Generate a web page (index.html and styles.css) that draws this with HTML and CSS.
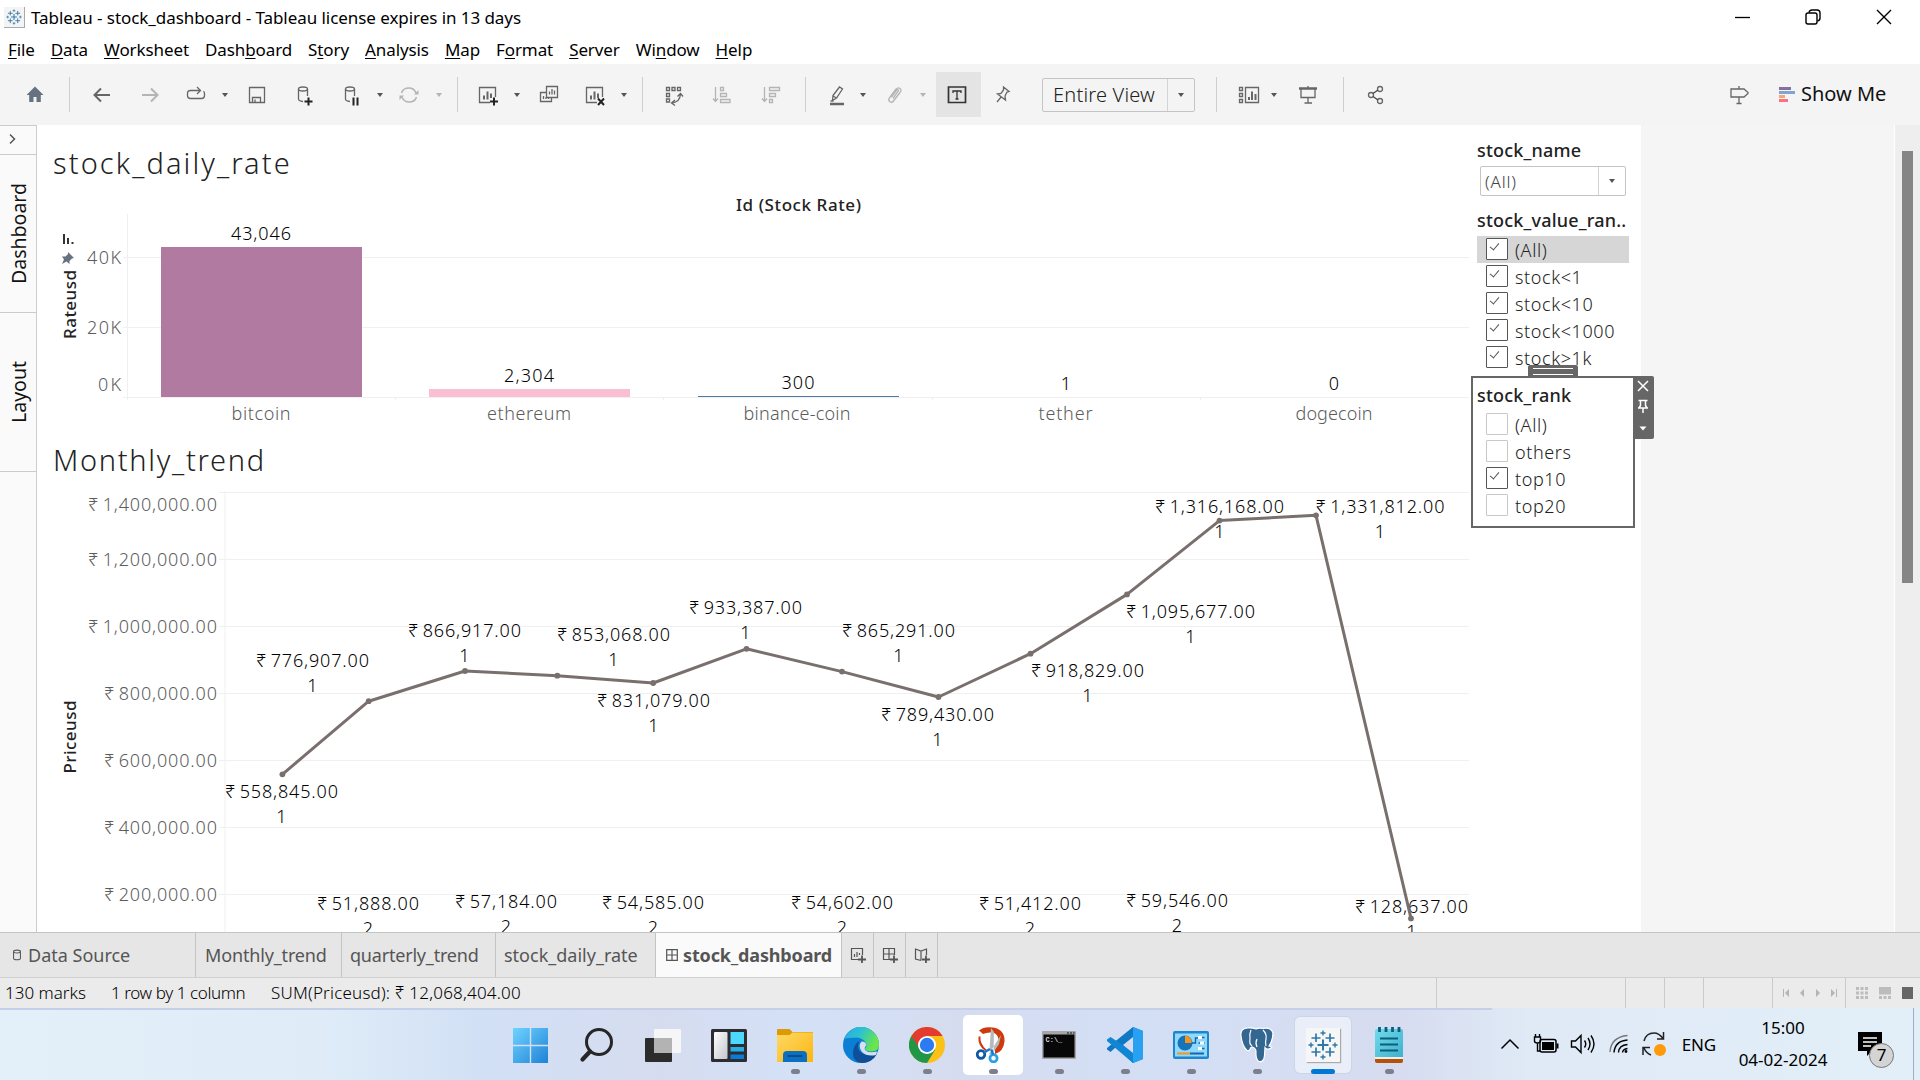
FILE: index.html
```html
<!DOCTYPE html>
<html lang="en">
<head>
<meta charset="utf-8">
<title>Tableau - stock_dashboard</title>
<link rel="stylesheet" href="styles.css">
</head>
<body>
<svg width="0" height="0" class="defs">
  <defs>
    <symbol id="tableau" viewBox="0 0 34 34">
      <g stroke="#2f78a8" fill="none">
        <path d="M17 11.500v11M11.500 17h11" stroke-width="2"/>
        <path d="M10 5.500v8.500M5.500 10h9M24 5.500v8.500M19.500 10h9M10 19.500v9M5.500 24h9M24 19.500v9M19.500 24h9" stroke-width="1.700"/>
        <path d="M17 2.500v5M14.500 5h5M17 26.500v5M14.500 29h5M5 14.500v5M2.500 17h5M29 14.500v5M26.500 17h5" stroke-width="1.400"/>
      </g>
    </symbol>
    <symbol id="caret" viewBox="0 0 8 6"><path d="M1 1h6L4 5z" fill="currentColor"/></symbol>
    <linearGradient id="winG" x1="0" y1="0" x2="1" y2="1"><stop offset="0" stop-color="#6fd3ff"/><stop offset="1" stop-color="#1f82d6"/></linearGradient>
    <linearGradient id="foldG" x1="0" y1="0" x2="1" y2="1"><stop offset="0" stop-color="#ffd967"/><stop offset="1" stop-color="#fcb60f"/></linearGradient>
    <linearGradient id="edgeG" x1="0" y1="0" x2="1" y2="0.400"><stop offset="0" stop-color="#2aa7e8"/><stop offset="0.500" stop-color="#2cc3cf"/><stop offset="1" stop-color="#6be54a"/></linearGradient>
    <linearGradient id="greyG" x1="0" y1="0" x2="1" y2="1"><stop offset="0" stop-color="#ffffff"/><stop offset="1" stop-color="#c4c6ca"/></linearGradient>
    <linearGradient id="noteG" x1="0" y1="0" x2="1" y2="1"><stop offset="0" stop-color="#71dbec"/><stop offset="1" stop-color="#3fb0cc"/></linearGradient>
  </defs>
</svg>

<header class="titlebar">
  <span class="app-icon"><svg width="18" height="18"><use href="#tableau"/></svg></span>
  <span class="app-title">Tableau - stock_dashboard - Tableau license expires in 13 days</span>
  <div class="win-btns">
    <svg width="18" height="18" viewBox="0 0 18 18"><path d="M2 9.500h15" stroke="#000" stroke-width="1.300"/></svg>
    <svg width="18" height="18" viewBox="0 0 18 18" fill="none" stroke="#000" stroke-width="1.400"><rect x="2" y="5" width="11" height="11" rx="2"/><path d="M5 4.500Q5.500 2 8 2h5q3 0 3 3v5q0 2.500-2.500 3"/></svg>
    <svg width="18" height="18" viewBox="0 0 18 18"><path d="M2 2l14 14M16 2L2 16" stroke="#000" stroke-width="1.400"/></svg>
  </div>
</header>

<nav class="menubar">
  <span><u>F</u>ile</span><span><u>D</u>ata</span><span><u>W</u>orksheet</span><span>Dash<u>b</u>oard</span><span>S<u>t</u>ory</span><span><u>A</u>nalysis</span><span><u>M</u>ap</span><span>F<u>o</u>rmat</span><span><u>S</u>erver</span><span>Wi<u>n</u>dow</span><span><u>H</u>elp</span>
</nav>

<div class="toolbar">
  <svg class="ic" viewBox="0 0 24 24"><path d="M12 3.500L3.500 12h2.700v7h4.300v-5h3v5h4.300v-7h2.700z" fill="#66727f" stroke="none"/></svg>
  <i class="sep"></i>
  <svg class="ic" viewBox="0 0 24 24"><path d="M20 12H4.500M11 5.500L4.500 12l6.500 6.500" stroke-width="2"/></svg>
  <svg class="ic dim" viewBox="0 0 24 24"><path d="M4 12h15.500M13 5.500l6.500 6.500-6.500 6.500" stroke-width="2"/></svg>
  <svg class="ic" viewBox="0 0 24 24"><path d="M16 7.500H6.500q-3 0-3 3v2q0 3 3 3h11q3 0 3-3v-2q0-1.500-1-2.300M13 4l3.500 3.500L13 11"/></svg>
  <svg class="caret"><use href="#caret"/></svg>
  <svg class="ic" viewBox="0 0 24 24"><path d="M4.500 4.500h15v15h-15zM7.500 19.500v-5h8v5M10 19.500v-3" /></svg>
  <svg class="ic" viewBox="0 0 24 24"><path d="M6.500 6v10q0 2 4.500 2.500M15.500 6v7"/><ellipse cx="11" cy="6" rx="4.500" ry="2"/><path d="M12.500 18.500h8M16.500 14.500v8" stroke="#222" stroke-width="2"/></svg>
  <svg class="ic" viewBox="0 0 24 24"><path d="M6.500 6v10q0 2 4.500 2.500M15.500 6v7"/><ellipse cx="11" cy="6" rx="4.500" ry="2"/><path d="M14.500 14.500v8M18.500 14.500v8" stroke="#222" stroke-width="2"/></svg>
  <svg class="caret"><use href="#caret"/></svg>
  <svg class="ic dim" viewBox="0 0 24 24"><path d="M4.500 10Q6 5 12 5q5 0 7 5M19.500 14Q18 19 12 19q-5 0-7-5" stroke-width="1.500"/><path d="M21.500 7v4.500H17zM2.500 17v-4.500H7z" fill="#b4b4b4" stroke="none"/></svg>
  <svg class="caret dim"><use href="#caret"/></svg>
  <i class="sep"></i>
  <svg class="ic" viewBox="0 0 24 24"><path d="M19.500 14V4.500h-16v15H14"/><path d="M8 12.500v4M11.500 8.500v8M15 10.500v4.500" stroke-width="2"/><path d="M14 18.500h8M18 14.500v8" stroke="#222" stroke-width="2"/></svg>
  <svg class="caret"><use href="#caret"/></svg>
  <svg class="ic" viewBox="0 0 24 24"><path d="M9.500 3.500h11v11h-11zM9 9.500H3.500v9h11V15M12.500 8.500v3M15 6v5.500M17.500 7.500v4M6.500 13v3M9 14v2M11.500 15v1"/></svg>
  <svg class="ic" viewBox="0 0 24 24"><path d="M19.500 14V4.500h-16v15H14"/><path d="M8 12.500v4M11.500 8.500v8M15 10.500v4.500" stroke-width="2"/><path d="M15 15.500l6 6.500M21 15.500L15 22" stroke="#222" stroke-width="2"/></svg>
  <svg class="caret"><use href="#caret"/></svg>
  <i class="sep"></i>
  <svg class="ic" viewBox="0 0 24 24"><path d="M4.500 4.500h3v3h-3zM10 4.500h3v3h-3zM15.500 4.500h3v3h-3zM4.500 10.500h3v3h-3zM4.500 16h3v3h-3zM10 20Q18 19 18.500 11M15.500 13.500L18.500 10.500l2.500 3M13 17l-3.500 3 3.500 2.500"/></svg>
  <svg class="ic dim" viewBox="0 0 24 24"><path d="M5.500 4v14M3 15.500l2.500 3 2.500-3M10.500 4.500h3v3h-3zM10.500 10.500h6v3h-6zM10.500 16.500h9.500v3h-9.500z"/></svg>
  <svg class="ic dim" viewBox="0 0 24 24"><path d="M5.500 4v14M3 15.500l2.500 3 2.500-3M10.500 4.500h10v3h-10zM10.500 10.500h6v3h-6zM10.500 16.500h3v3h-3z"/></svg>
  <i class="sep"></i>
  <svg class="ic" viewBox="0 0 24 24"><path d="M8 12.500L14.500 4l3 2-6 9-4 2.500zM8 13l3.500 2M5.500 18h3"/><path d="M5 21h14" stroke-width="2.500"/></svg>
  <svg class="caret"><use href="#caret"/></svg>
  <svg class="ic dim" viewBox="0 0 24 24"><path d="M7.500 14L13 6.500q2-2.500 4-1t0 4L10.500 18q-1.500 2-3.500.800t-.7-3.800L13 6M10 15.500l5-7q.8-1.200 0-1.700t-1.500.500L8.500 14"/></svg>
  <svg class="caret dim"><use href="#caret"/></svg>
  <span class="tbtn"><svg class="ic dark" viewBox="0 0 24 24"><path d="M3.500 4h17v15.500h-17z" stroke-width="1.700"/><path d="M8 10V8h8v2M12 8v8M10.500 16h3"/></svg></span>
  <svg class="ic" viewBox="0 0 24 24"><path d="M12.500 4l5.500 4.500-2 .5-2 4 .5 4-8-6 3.500-.5 2.500-3.500zM10.500 13.500L6 19"/></svg>
  <div class="combo"><span>Entire View</span><b><svg class="caret"><use href="#caret"/></svg></b></div>
  <i class="sep"></i>
  <svg class="ic" viewBox="0 0 24 24"><path d="M8.500 4.500h13v15h-13zM2.500 4.500h3v3h-3zM2.500 10.500h3v3h-3zM2.500 16.500h3v3h-3z"/><path d="M12 14v3M15 8.500V17M18.500 11v6" stroke-width="2"/></svg>
  <svg class="caret"><use href="#caret"/></svg>
  <svg class="ic" viewBox="0 0 24 24"><path d="M3 5.500h18" stroke-width="2.500"/><path d="M5 6v8.500h14V6M12 14.500v6M8.500 20h7.500M12 3v2"/></svg>
  <i class="sep"></i>
  <svg class="ic" viewBox="0 0 24 24"><circle cx="7" cy="12" r="2.500"/><circle cx="16" cy="6" r="2.500"/><circle cx="16" cy="18" r="2.500"/><path d="M9 10.500l5-3.500M9 13.500l5 3.500" stroke="#444"/></svg>
  <svg class="ic" viewBox="0 0 24 24"><path d="M4 6h13l4 3.500v1L17 14H4zM12 3v3M12 14v6.500M9.500 20.500h5"/></svg>
  <svg class="bars" viewBox="0 0 16 17" width="16" height="17"><path d="M0 1h12v3H0z" fill="#8a6f9d"/><path d="M0 5h16v3H0z" fill="#7fa5d3"/><path d="M0 9h6v3H0z" fill="#f6a771"/><path d="M0 13h9v3H0z" fill="#ff6f83"/></svg>
  <span class="showme">Show Me</span>
</div>

<main class="workspace">
  <aside class="rail">
    <div class="rail-toggle"><svg width="10" height="14" viewBox="0 0 10 14"><path d="M2 2.500l4.500 4.500L2 11.500" fill="none" stroke="#555" stroke-width="1.500"/></svg></div>
    <div class="rail-tab"><span>Dashboard</span></div>
    <div class="rail-tab low"><span>Layout</span></div>
  </aside>

  <section class="canvas">
    <div class="sheets">
      <h2>stock_daily_rate</h2>
      <svg class="chart" width="1434" height="240" viewBox="37 190 1434 240">
        <text class="head" x="798.500" y="211" textLength="125" text-anchor="middle">Id (Stock Rate)</text>
        <g class="grid"><path d="M127.500 214V400M123 257.500H1469M123 327.500H1469M123 397.500H1469M395.500 397v3M663.500 397v3M932.500 397v3M1200.500 397v3"/></g>
        <rect x="161" y="247" width="201" height="150" fill="#b07aa1"/>
        <rect x="429" y="389" width="201" height="8" fill="#fabfd2"/>
        <rect x="698" y="396" width="201" height="1" fill="#4e79a7"/>
        <g class="axis" text-anchor="end">
          <text x="121" y="264" textLength="34">40K</text><text x="121" y="334" textLength="34">20K</text><text x="121" y="391" textLength="23">0K</text>
        </g>
        <g class="axis" text-anchor="middle">
          <text x="261" y="420" textLength="59">bitcoin</text><text x="529" y="420" textLength="84">ethereum</text><text x="797" y="420" textLength="107">binance-coin</text><text x="1065.500" y="420" textLength="54">tether</text><text x="1334" y="420" textLength="77">dogecoin</text>
        </g>
        <g class="mark" text-anchor="middle">
          <text x="261" y="240" textLength="60">43,046</text><text x="529" y="382" textLength="50">2,304</text><text x="798" y="389" textLength="33">300</text><text x="1066" y="390">1</text><text x="1334" y="390">0</text>
        </g>
        <text class="head" transform="translate(76 304.500) rotate(-90)" textLength="69" text-anchor="middle">Rateusd</text>
        <path d="M63 234h2v10h-2zM67 238h2v6h-2zM71.500 242h2v2h-2z" fill="#333"/>
        <path d="M68 252l6 6-2 .5-2.500 2.500 0 3-3-2.500L62 264l2-4.500-2-3h3.500l2.500-2.500z" fill="#66727f"/>
      </svg>
      <h2 class="second">Monthly_trend</h2>
      <svg class="chart" width="1434" height="447" viewBox="37 485 1434 447">
        <g class="grid"><path d="M225 491V932M219 492.500H1469M219 559.500H1469M219 626.500H1469M219 693.500H1469M219 760.500H1469M219 827.500H1469M219 894.500H1469"/></g>
        <g class="axis" text-anchor="end">
          <text x="217" y="511" textLength="129">₹ 1,400,000.00</text><text x="217" y="566" textLength="129">₹ 1,200,000.00</text><text x="217" y="633" textLength="129">₹ 1,000,000.00</text><text x="217" y="700" textLength="113">₹ 800,000.00</text><text x="217" y="767" textLength="113">₹ 600,000.00</text><text x="217" y="834" textLength="113">₹ 400,000.00</text><text x="217" y="901" textLength="113">₹ 200,000.00</text>
        </g>
        <text class="head" transform="translate(76 737) rotate(-90)" textLength="73" text-anchor="middle">Priceusd</text>
        <g class="mark" text-anchor="middle">
          <text x="281.500" y="798" textLength="113">₹ 558,845.00</text><text x="281.500" y="823">1</text>
          <text x="312.500" y="667" textLength="113">₹ 776,907.00</text><text x="312.500" y="692">1</text>
          <text x="464.500" y="637" textLength="113">₹ 866,917.00</text><text x="464.500" y="662">1</text>
          <text x="613.500" y="641" textLength="113">₹ 853,068.00</text><text x="613.500" y="666">1</text>
          <text x="653.500" y="707" textLength="113">₹ 831,079.00</text><text x="653.500" y="732">1</text>
          <text x="745.500" y="614" textLength="113">₹ 933,387.00</text><text x="745.500" y="639">1</text>
          <text x="898.500" y="637" textLength="113">₹ 865,291.00</text><text x="898.500" y="662">1</text>
          <text x="937.500" y="721" textLength="113">₹ 789,430.00</text><text x="937.500" y="746">1</text>
          <text x="1087.500" y="677" textLength="113">₹ 918,829.00</text><text x="1087.500" y="702">1</text>
          <text x="1190.500" y="618" textLength="129">₹ 1,095,677.00</text><text x="1190.500" y="643">1</text>
          <text x="1219.500" y="513" textLength="129">₹ 1,316,168.00</text><text x="1219.500" y="538">1</text>
          <text x="1380" y="513" textLength="129">₹ 1,331,812.00</text><text x="1380" y="538">1</text>
          <text x="1411.500" y="913" textLength="113">₹ 128,637.00</text><text x="1411.500" y="938">1</text>
          <text x="368" y="910" textLength="102">₹ 51,888.00</text><text x="368" y="935">2</text>
          <text x="506" y="908" textLength="102">₹ 57,184.00</text><text x="506" y="933">2</text>
          <text x="653" y="909" textLength="102">₹ 54,585.00</text><text x="653" y="934">2</text>
          <text x="842" y="909" textLength="102">₹ 54,602.00</text><text x="842" y="934">2</text>
          <text x="1030" y="910" textLength="102">₹ 51,412.00</text><text x="1030" y="935">2</text>
          <text x="1177" y="907" textLength="102">₹ 59,546.00</text><text x="1177" y="932">2</text>
        </g>
        <polyline points="282.400,774.300 368.700,701.200 465,671 557.300,675.700 653.200,683 746.500,648.800 842,671.600 938.500,697 1030.500,653.700 1127,594.400 1219.500,520.600 1316,515.300 1411,918.400" fill="none" stroke="#79706e" stroke-width="3" stroke-linejoin="round"/>
        <g fill="#79706e"><circle cx="282.400" cy="774.300" r="2.900"/><circle cx="368.700" cy="701.200" r="2.900"/><circle cx="465" cy="671" r="2.900"/><circle cx="557.300" cy="675.700" r="2.900"/><circle cx="653.200" cy="683" r="2.900"/><circle cx="746.500" cy="648.800" r="2.900"/><circle cx="842" cy="671.600" r="2.900"/><circle cx="938.500" cy="697" r="2.900"/><circle cx="1030.500" cy="653.700" r="2.900"/><circle cx="1127" cy="594.400" r="2.900"/><circle cx="1219.500" cy="520.600" r="2.900"/><circle cx="1316" cy="515.300" r="2.900"/><circle cx="1411" cy="918.400" r="2.900"/></g>
      </svg>
    </div>

    <aside class="filters">
      <h3 class="f-name">stock_name</h3>
      <div class="select"><span>(All)</span><b><svg class="caret"><use href="#caret"/></svg></b></div>
      <h3 class="f-range">stock_value_ran..</h3>
      <ul class="checks range">
        <li class="on sel"><i></i><span>(All)</span></li>
        <li class="on"><i></i><span>stock&lt;1</span></li>
        <li class="on"><i></i><span>stock&lt;10</span></li>
        <li class="on"><i></i><span>stock&lt;1000</span></li>
        <li class="on"><i></i><span>stock&gt;1k</span></li>
      </ul>
      <div class="rank">
        <div class="grip"></div>
        <h3>stock_rank</h3>
        <ul class="checks">
          <li><i></i><span>(All)</span></li>
          <li><i></i><span>others</span></li>
          <li class="on"><i></i><span>top10</span></li>
          <li><i></i><span>top20</span></li>
        </ul>
        <div class="rank-tools">
          <svg width="20" height="63" viewBox="0 0 20 63" fill="none" stroke="#fff" stroke-width="1.500"><path d="M5 5l10 10M15 5L5 15M5.500 24.500h9M7.500 24.500v5.500M12.500 24.500v5.500M5 32h10M6 32l1.500-2.500M14 32l-1.500-2.500M10 32v5"/><path d="M6.500 50.500h7l-3.500 4z" fill="#fff" stroke="none"/></svg>
        </div>
      </div>
    </aside>
  </section>
  <div class="void"></div>
  <div class="scroll"><div class="thumb"></div></div>
</main>

<div class="tabs">
  <div class="tab ds"><svg width="10" height="12" viewBox="0 0 10 14"><path d="M1 3v8q0 1.500 4 1.500t4-1.500V3" /><ellipse cx="5" cy="3" rx="4" ry="1.700"/></svg><span>Data Source</span></div>
  <div class="tab t-m"><span>Monthly_trend</span></div>
  <div class="tab t-q"><span>quarterly_trend</span></div>
  <div class="tab t-s"><span>stock_daily_rate</span></div>
  <div class="tab active"><svg width="12" height="12" viewBox="0 0 12 12"><path d="M.7.700h10.600v10.600H.7zM6 1v10M1 6h10"/></svg><span>stock_dashboard</span></div>
  <div class="tab add"><svg width="16" height="16" viewBox="0 0 16 16"><path d="M12.500 8V1.500h-11v11H8M4.500 7v3M7 5v5M9.500 6v2"/><path d="M8 12.500h8M12 8.500v7.500" stroke-width="1.800"/></svg></div>
  <div class="tab add"><svg width="16" height="16" viewBox="0 0 16 16"><path d="M12.500 8V1.500h-11v11H8M7 1.500v11M1.500 7h11"/><path d="M8 12.500h8M12 8.500v7.500" stroke-width="1.800"/></svg></div>
  <div class="tab add"><svg width="16" height="16" viewBox="0 0 16 16"><path d="M12.500 8V2L7 4 1.500 2v10L7 13.500M7 4v9.500"/><path d="M8 12.500h8M12 8.500v7.500" stroke-width="1.800"/></svg></div>
</div>

<div class="status">
  <span>130 marks</span><span class="dims">1 row by 1 column</span><span class="sum">SUM(Priceusd): ₹ 12,068,404.00</span>
  <div class="cells">
    <i></i><i></i><i></i><i></i>
    <i class="nav"><svg width="60" height="12" viewBox="0 0 60 12" fill="#b4b4b4"><path d="M0 2h1v8H0zM6 2v8L2 6zM21 2v8l-4-4zM33 2v8l4-4zM48 2v8l4-4zM53 2h1v8h-1z"/></svg></i>
    <i class="views"><svg width="64" height="12" viewBox="0 0 64 12"><path d="M1 0h3v3H1zM5.500 0h3v3h-3zM10 0h3v3h-3zM1 4.500h3v3H1zM5.500 4.500h3v3h-3zM10 4.500h3v3h-3zM1 9h3v3H1zM5.500 9h3v3h-3zM10 9h3v3h-3zM24 0h12v7.500H24zM24 9h3v3h-3zM28.500 9h3v3h-3zM33 9h3v3h-3z" fill="#bcbcbc"/><path d="M47 0h11v12H47z" fill="#666"/></svg></i>
  </div>
</div>

<footer class="taskbar">
  <div class="apps">
    <div class="app"><svg viewBox="0 0 36 36"><path d="M0 1h16.800v16.800H0zM18.200 1H35v16.800H18.200zM0 19.200h16.800V36H0zM18.200 19.200H35V36H18.200z" fill="url(#winG)"/></svg></div>
    <div class="app"><svg viewBox="0 0 36 36" fill="none" stroke="#262626"><circle cx="20" cy="15" r="12.500" stroke-width="3"/><path d="M11 24.500L3.500 32.500" stroke-width="4.200" stroke-linecap="round"/></svg></div>
    <div class="app"><svg viewBox="0 0 36 36"><rect x="0" y="11" width="27" height="24" rx="1" fill="#2c2c2c"/><rect x="9" y="2" width="27" height="24" rx="1" fill="#f6f6f6"/><path d="M9 11h18v15H9z" fill="#b3b3b3"/></svg></div>
    <div class="app"><svg viewBox="0 0 36 36"><rect x="0" y="2" width="36" height="33" rx="1.500" fill="#2b2d31"/><rect x="3" y="5" width="13.500" height="27" rx="1" fill="url(#greyG)"/><path d="M19.500 5H33v12H19.500z" fill="#4cd8ff"/><path d="M19.500 20H33v4.500H19.500z" fill="#27aee8"/><path d="M19.500 27.500H33V32H19.500z" fill="#0a7bd8"/></svg></div>
    <div class="app run"><svg viewBox="0 0 36 36"><path d="M0 3q0-1 1-1h11.500l3 3H36v6H0z" fill="#dc9a05"/><path d="M0 8h12.500l3-2.500H36V35H0z" fill="url(#foldG)"/><path d="M6 35v-7q0-4 4-4h16q4 0 4 4v7z" fill="#0d6fc0"/><path d="M10.500 29h15" stroke="#0a4a8c" stroke-width="1.800"/></svg></div>
    <div class="app run"><svg viewBox="0 0 36 36"><circle cx="18" cy="18" r="18" fill="#0a7fd4"/><path d="M1 12A18 18 0 0 1 36 18q0 6-7 6.500-7 .5-7-3 2-2 1-5-2-5-9-6-8 0-13 1.500z" fill="url(#edgeG)"/><path d="M34 27q-5 9-15.500 9Q8 34 10.500 22q2-6 6-8-3 6 0 10 5 6 17.500 3z" fill="#104f97"/><path d="M18.500 14.500q5 0 4.500 4-2 2.500-1 4.500 3 3.500 12 1.500l-1 3.500q-9 2-14-3-4.500-6-.5-10.500z" fill="#d7e0f3"/></svg></div>
    <div class="app run"><svg viewBox="0 0 36 36"><circle cx="18" cy="18" r="18" fill="#fbc116"/><path d="M18 18L2.400 9A18 18 0 0 0 18 36l8-13z" fill="#219646"/><path d="M2.400 9A18 18 0 0 1 33.600 9H18L9 19z" fill="#e33b2e"/><circle cx="18" cy="18" r="9" fill="#fff"/><circle cx="18" cy="18" r="7.200" fill="#2c7bf2"/></svg></div>
    <div class="app run focus"><svg viewBox="0 0 36 36" fill="none"><path d="M4 3.500Q9-1 18 .5q12 2 11.500 14-1 10-9.500 12.500v-6q4-2 4-7Q23 6 17 5.500q-5-.5-9 1.500z" fill="#cf3a0c"/><path d="M4.500 9.500q-1 8 6.500 14" stroke="#cf3a0c" stroke-width="2"/><path d="M16 1l3 4-.5 21-4-3zM26 8L14 27l3 .5L24 17z" fill="#b6babd"/><circle cx="6" cy="27.500" r="3.800" stroke="#0d56a8" stroke-width="2.700"/><circle cx="18.500" cy="31.300" r="3.600" stroke="#2b9fe8" stroke-width="2.700"/><path d="M9 25.500l6-3.500M18 27.500l-1.500-5" stroke="#1678cc" stroke-width="2.500"/></svg></div>
    <div class="app run"><svg viewBox="0 0 36 36"><rect x="1" y="4" width="34" height="28" rx="1" fill="#a6a6a6"/><path d="M2.500 7.500h31v23h-31z" fill="#080808"/><path d="M26 6h2M29 6h2M32 6h1.500" stroke="#444" stroke-width="1.300"/><text x="4.500" y="14.500" class="cmd">C:\_</text></svg></div>
    <div class="app run"><svg viewBox="0 0 36 36"><path d="M26 0l10 4v28l-10 4L9 20l-5.500 5L0 22.500V21L26 0z" fill="#1178c4"/><path d="M3.500 10L0 12.500V14l26 22 2-10z" fill="#1186d2"/><path d="M26 0l10 4v28l-10 4z" fill="#29a1f2"/><path d="M26 10v16l-10-8z" fill="#d5dcf0"/></svg></div>
    <div class="app run"><svg viewBox="0 0 36 36"><rect x="0" y="4" width="36" height="28" rx="2" fill="#1d86cf"/><rect x="2" y="6.500" width="32" height="23" fill="#8fd9fa"/><circle cx="12" cy="16" r="7.500" fill="#1873ba"/><path d="M12 16V8.500a7.500 7.500 0 0 1 7 7.500z" fill="#f5941f"/><path d="M4 26.500h13" stroke="#f5941f" stroke-width="2"/><path d="M17 26.500h14" stroke="#1464b0" stroke-width="2"/><path d="M18.500 16h4v-5h3M25.500 10.500h6M25.500 16h6M25.500 21.500h6" stroke="#1464b0" stroke-width="1.400" fill="none"/><path d="M25 9h4v3h-4zM27 14.500h4v3h-4zM25 20h4v3h-4z" fill="#fff"/></svg></div>
    <div class="app run"><svg viewBox="0 0 36 36"><path d="M9 1Q1 1 2 9q1 9 5.500 14 3 2 4-2l2-1q3 1 3.500 4-.5 9 3 10.500 5 1 5.500-6l.5-8q2 3 6 .5 2-1-2-2 4-6 4-13Q32 0 24 1.500q-4-1-7 .5-4-1.500-8-1z" fill="#336791" stroke="#fff" stroke-width="1.200"/><path d="M12 3q-2 4-1 9-1 5 2 7M24 3q4 4 3 9-1 3 0 7M18 12q-2 4 0 8" stroke="#fff" fill="none" stroke-width="1.200"/></svg></div>
    <div class="app run cur"><span><svg viewBox="0 0 34 34"><use href="#tableau"/></svg></span></div>
    <div class="app run"><svg viewBox="0 0 36 36"><path d="M4 31h28v3q0 2-2 2H6q-2 0-2-2z" fill="#b35208"/><path d="M4 28h28v4H4z" fill="#efefef"/><path d="M4 4q0-2 2-2h24q2 0 2 2v26H4z" fill="url(#noteG)"/><path d="M9 11.500h18M9 17.500h18M9 23.500h18" stroke="#0b5f7b" stroke-width="2"/><path d="M8.500 0v5M15 0v5M21.500 0v5M28 0v5" stroke="#0b5f7b" stroke-width="2.800"/></svg></div>
  </div>
  <div class="tray">
    <svg width="20" height="12" viewBox="0 0 20 12"><path d="M1.500 10.500L10 2l8.500 8.500" fill="none" stroke="#000" stroke-width="1.500"/></svg>
    <svg width="26" height="20" viewBox="0 0 26 20"><rect x="7" y="5.500" width="16" height="12.500" rx="2" fill="none" stroke="#000" stroke-width="1.500"/><path d="M9 8h12v8H9zM23.500 9.500h2v5h-2z"/><path d="M1.500 3h6v4q0 2-3 2t-3-2zM2.500 0v3M6.500 0v3M4.500 9v8h3" fill="none" stroke="#000" stroke-width="1.400"/></svg>
    <svg width="25" height="22" viewBox="0 0 25 22" fill="none" stroke="#000" stroke-width="1.400"><path d="M1.500 8h4L11 2.500v17L5.500 14h-4zM14.500 7.500q2.500 3.500 0 7M18 5q4 6 0 12M21 2.500q6 8.500 0 17"/></svg>
    <svg width="20" height="20" viewBox="0 0 20 20" fill="none" stroke="#000" stroke-width="1.400"><path d="M1 18Q2 3 18.500 1.500" stroke="#777"/><path d="M5 18.500Q6 7 18.500 6M9.500 18.500Q10 11 18.500 10.500M13.500 18.500q.500-3.500 5-4"/><circle cx="17" cy="17.500" r="1.400" fill="#000" stroke="none"/></svg>
    <svg width="28" height="26" viewBox="0 0 28 26"><path d="M3 10Q5 2 13 2q5 0 9 5.500M22.500 1v7H16M10 24Q5 22 3 17M2 24v-7.500h7" fill="none" stroke="#222" stroke-width="1.500"/><circle cx="19" cy="19" r="6" fill="#ff9a0a"/></svg>
    <span class="lang">ENG</span>
    <div class="clock"><span>15:00</span><span>04-02-2024</span></div>
    <div class="notif"><svg width="24" height="24" viewBox="0 0 24 24"><path d="M0 0h24v19H14l-5 5v-5H0z"/><path d="M5 6h14M5 10h14M5 14h8" stroke="#fff" stroke-width="1.400"/></svg><em>7</em></div>
    <div class="peek"></div>
  </div>
</footer>
</body>
</html>
```
FILE: styles.css
```css
* { box-sizing: border-box; }
body {
  margin: 0;
  width: 1920px;
  height: 1080px;
  overflow: hidden;
  background: #fff;
  color: #000;
  font-family: "Noto Sans", "Open Sans", sans-serif;
  font-size: 18px;
  display: flex;
  flex-direction: column;
}
svg { display: block; flex: none; }
.defs { position: absolute; }
h2, h3, ul { margin: 0; padding: 0; list-style: none; }
i, em { font-style: normal; }

/* window chrome */
.titlebar { height: 35px; flex: none; display: flex; align-items: center; padding: 0 0 1px 4px; }
.app-icon { width: 21px; height: 21px; background: #f4f4f4; border-right: 1px solid #aaa; border-bottom: 1px solid #aaa; display: grid; place-items: center; }
.app-title { margin-left: 6px; font-size: 17px; letter-spacing: -.06px; white-space: nowrap; }
.win-btns { margin-left: auto; display: flex; gap: 53px; padding-right: 27px; }
.menubar { height: 29px; flex: none; display: flex; align-items: center; gap: 16px; padding-left: 8px; font-size: 17px; letter-spacing: -.1px; }
.menubar u { text-underline-offset: 2px; text-decoration-thickness: 1px; }

.toolbar {
  height: 61px; flex: none; background: #f4f4f4; align-items: center; justify-items: end;
  display: grid;
  grid-template-columns: 47px 23px 44px 48px 46px 21px 40px 47px 47px 21px 37px 22px 15px 42px 21px 40px 46px 21px 15px 43px 48px 49px 23px 43px 18px 40px 20px 54px 34px 180px 22px 44px 17px 42px 24px 44px 363px 44px 125px;
}
.ic { width: 24px; height: 24px; fill: none; stroke: #666; stroke-width: 1.300; }
.ic.dim { stroke: #b4b4b4; }
.ic.dark { stroke: #333; }
.caret { width: 8px; height: 6px; color: #555; }
.caret.dim { color: #b4b4b4; }
.sep { width: 1px; height: 35px; background: #cfcfcf; }
.tbtn { width: 45px; height: 45px; background: #e4e4e4; padding-left: 9px; display: flex; align-items: center; }
.combo { width: 153px; height: 34px; border: 1px solid #c4c4c4; border-radius: 2px; display: flex; align-items: center; justify-content: space-between; padding-left: 10px; font-size: 20px; font-weight: 300; letter-spacing: .2px; color: #222; white-space: nowrap; }
.combo b { width: 27px; height: 32px; border-left: 1px solid #d4d4d4; display: grid; place-items: center; }
.showme { justify-self: start; margin-left: 6px; margin-top: -2px; font-size: 20px; color: #111; white-space: nowrap; }

/* workspace */
.workspace { height: 807px; flex: none; display: flex; background: #f5f5f5; }
.rail { width: 37px; background: #fafafa; border-right: 1px solid #ccc; border-top: 1px solid #ccc; }
.rail-toggle { height: 29px; border-bottom: 1px solid #ccc; padding: 6px 0 0 8px; }
.rail-tab { height: 158px; border-bottom: 1px solid #ccc; display: grid; place-items: center; font-size: 19.500px; color: #111; }
.rail-tab.low { height: 159px; }
.rail-tab span { writing-mode: vertical-rl; transform: rotate(180deg); }
.canvas { width: 1604px; background: #fff; display: flex; }
.sheets { width: 1434px; }
.sheets h2 { height: 65px; padding-left: 16px; font-size: 29px; line-height: 76px; font-weight: 300; letter-spacing: 2.100px; color: #222; }
.sheets h2.second { height: 55px; line-height: 60px; letter-spacing: 1.700px; }
.chart text { font-size: 18px; white-space: pre; word-spacing: -2px; }
.chart .head { font-weight: 500; fill: #222; font-size: 17px; word-spacing: 0; }
.axis { fill: #5c5c5c; font-weight: 300; }
.mark { fill: #000; font-weight: 300; }
.grid { stroke: #f0f0f0; stroke-width: 1; fill: none; }

.filters { width: 170px; font-weight: 300; color: #222; }
.filters h3 { padding-left: 6px; font-size: 18px; font-weight: 500; letter-spacing: .2px; line-height: 24px; white-space: nowrap; }
.filters .f-name { padding-top: 13px; height: 41px; }
.select { margin-left: 9px; width: 146px; height: 30px; border: 1px solid #c4c4c4; border-radius: 2px; display: flex; justify-content: space-between; align-items: center; padding-left: 4px; font-size: 17px; letter-spacing: .8px; color: #444; }
.select b { width: 27px; height: 28px; border-left: 1px solid #d4d4d4; display: grid; place-items: center; }
.filters .f-range { padding-top: 12px; height: 40px; }
.checks li { height: 27px; display: flex; align-items: center; font-size: 18px; letter-spacing: .6px; margin: 0 12px 0 6px; padding-left: 9px; white-space: nowrap; }
.checks li i { width: 22px; height: 22px; margin-top: -2px; border: 1px solid #c8c8c8; border-radius: 1px; background: #fff; margin-right: 7px; display: block; flex: none; }
.checks li.on i { border-color: #555; }
.checks li.on i::before { content: ""; display: block; width: 4px; height: 8px; margin: 2px 0 0 5px; border: solid #555; border-width: 0 1.500px 1.500px 0; transform: rotate(40deg); }
.checks li.sel { background: #d6d6d6; }
.range { height: 140px; }
.rank { position: relative; width: 164px; height: 152px; border: 2px solid #666; background: #fff; }
.filters .rank h3 { padding: 5px 0 0 4px; height: 33px; }
.rank .checks li { margin: 0 4px; }
.grip { position: absolute; left: 55px; top: -13px; width: 50px; height: 12px; background: #666; border-radius: 2px 2px 0 0; }
.grip::before { content: ""; position: absolute; left: 5px; right: 5px; top: 3px; height: 5px; border: solid #fff; border-width: 1px 0; }
.rank-tools { position: absolute; left: 160px; top: -2px; width: 21px; height: 63px; background: #666; border-radius: 0 2px 2px 0; }
.void { width: 253px; }
.scroll { width: 26px; background: #eee; border-left: 1px solid #fff; padding: 26px 0 0 7px; }
.thumb { width: 11px; height: 432px; background: #858585; }

/* sheet tabs */
.tabs { height: 46px; flex: none; display: flex; background: #e6e6e6; border-top: 1px solid #c4c4c4; border-bottom: 1px solid #cfcfcf; color: #555; }
.tab { display: flex; align-items: center; border-right: 1px solid #c4c4c4; white-space: nowrap; }
.tab svg { fill: none; stroke: #555; stroke-width: 1.200; }
.ds { width: 196px; padding-left: 12px; gap: 6px; }
.t-m { width: 146px; padding-left: 9px; letter-spacing: -.15px; }
.t-q { width: 154px; padding-left: 8px; letter-spacing: -.2px; }
.t-s { width: 160px; padding-left: 8px; }
.active { width: 186px; padding-left: 10px; gap: 5px; background: #fafafa; font-weight: 700; letter-spacing: -.15px; }
.add { width: 32px; justify-content: center; }

.status { height: 30px; flex: none; display: flex; align-items: center; background: #ebebeb; padding-left: 5px; font-size: 17px; font-weight: 300; color: #000; white-space: nowrap; }
.status > span { width: 106px; margin-top: -2px; }
.status > .dims { width: 160px; letter-spacing: -.4px; }
.status > .sum { width: 260px; letter-spacing: .2px; }
.cells { margin-left: auto; height: 100%; display: grid; grid-template-columns: 189px 39px 39px 69px 73px 75px; }
.cells i { border-left: 1px solid #cacaca; display: flex; align-items: center; padding-left: 10px; }
.cells .views { padding-left: 9px; overflow: hidden; }

/* taskbar */
.taskbar { height: 72px; flex: none; display: flex; justify-content: space-between; padding-left: 498px; background: linear-gradient(90deg, #c5d0e8 0 1492px, transparent 1492px) 0 0 / 100% 2px no-repeat, linear-gradient(90deg, #e3f0f9 0, #dfecf8 320px, #d2e0f5 480px, #d6dcf0 660px, #d3e1f6 800px, #d6dcf0 960px, #d3dff5 1150px, #d7dcf0 1400px, #dfeaf6 1530px, #e2eef8 1920px); }
.apps { display: flex; }
.app { width: 66px; height: 72px; display: flex; flex-direction: column; align-items: center; padding-top: 19px; position: relative; }
.app > svg { width: 36px; height: 36px; }
.app.run::after { content: ""; position: absolute; bottom: 6px; width: 9px; height: 5px; border-radius: 3px; background: #7d808c; }
.app.focus::before { content: ""; position: absolute; left: 3px; top: 7px; width: 60px; height: 60px; background: #fff; border-radius: 5px; }
.app.focus svg { position: relative; }
.app.cur::before { content: ""; position: absolute; left: 5px; top: 9px; width: 56px; height: 56px; background: #e9eef8; border-radius: 5px; box-shadow: 0 0 0 1px #ccd4e6; }
.app.cur::after { width: 24px; background: #0078d4; }
.app.cur span { position: relative; width: 34px; height: 34px; margin-top: 1px; background: #f6f6f6; box-shadow: 1px 1px 1px #aaa; }
.cmd { font: 700 7px "Liberation Mono", monospace; fill: #ddd; }
.tray { display: grid; grid-template-columns: 19px 39px 36px 34px 40px 47px 114px 52px 38px; align-items: center; justify-items: end; width: 419px; }
.lang { font-size: 17px; letter-spacing: -.2px; }
.clock { display: flex; flex-direction: column; width: 94px; text-align: center; font-size: 17px; line-height: 32px; }
.notif { position: relative; width: 24px; height: 24px; }
.notif em { position: absolute; left: 11px; top: 11px; width: 25px; height: 25px; border: 1px solid #777; border-radius: 50%; background: #d4d4d4; font-size: 17px; line-height: 22px; text-align: center; }
.peek { width: 1px; height: 72px; background: #9fb0c4; margin-right: 6px; }
```
